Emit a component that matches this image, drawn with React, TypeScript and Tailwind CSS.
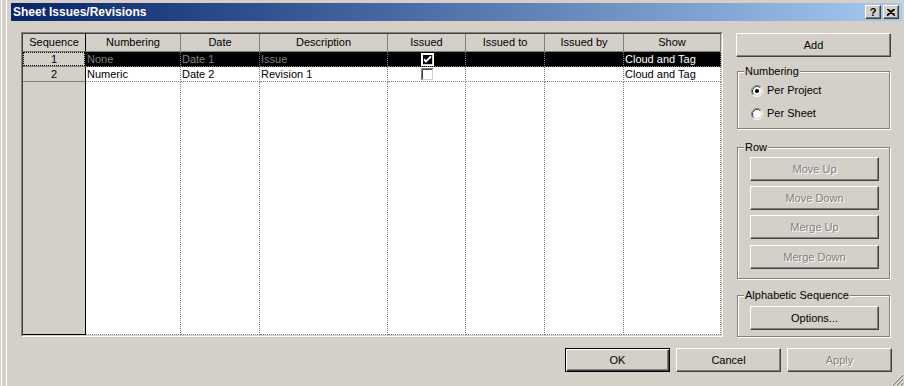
const font = "font-['Liberation_Sans',Arial,sans-serif]";
const raised =
  "bg-[#d4d0c8] border border-t-white border-l-white border-r-[#404040] border-b-[#404040] shadow-[inset_-1px_-1px_0_#808080]";
const dimText = "text-[#808080] [text-shadow:1px_1px_0_#fff]";

function Button({ label, disabled, w = "w-[129px]" }: { label: string; disabled?: boolean; w?: string }) {
  return (
    <div className={`${raised} ${w} h-[24px] flex items-center justify-center text-[11px] ${disabled ? dimText : "text-black"}`}>
      {label}
    </div>
  );
}

function Radio({ checked }: { checked?: boolean }) {
  return (
    <svg width="12" height="12" viewBox="0 0 12 12" className="shrink-0">
      <circle cx="6" cy="6" r="5" fill="#fff" />
      <path d="M2.11 9.89 A5.5 5.5 0 0 1 9.89 2.11" stroke="#808080" fill="none" />
      <path d="M9.89 2.11 A5.5 5.5 0 0 1 2.11 9.89" stroke="#fff" fill="none" />
      <path d="M2.82 9.18 A4.5 4.5 0 0 1 9.18 2.82" stroke="#404040" fill="none" />
      <path d="M9.18 2.82 A4.5 4.5 0 0 1 2.82 9.18" stroke="#d4d0c8" fill="none" />
      {checked && <circle cx="6" cy="6" r="2" fill="#000" />}
    </svg>
  );
}

function Check({ checked, dark }: { checked?: boolean; dark?: boolean }) {
  return (
    <svg width="13" height="13" viewBox="0 0 13 13">
      <rect x="0" y="0" width="13" height="13" fill="#fff" />
      <path d="M0.5 12.5 V0.5 H12.5" stroke={dark ? "#fff" : "#808080"} fill="none" />
      <path d="M1.5 11.5 V1.5 H11.5" stroke={dark ? "#fff" : "#404040"} fill="none" />
      <path d="M12.5 0.5 V12.5 H0.5" stroke="#fff" fill="none" />
      <path d="M11.5 1.5 V11.5 H1.5" stroke="#d4d0c8" fill="none" />
      <rect x="2" y="2" width="9" height="9" fill={dark ? "#000" : "#fff"} />
      {checked && (
        <path d="M3 6 L5 8 L10 3 M3 7 L5 9 L10 4" stroke={dark ? "#fff" : "#000"} strokeWidth="1.2" fill="none" />
      )}
    </svg>
  );
}

function Group({ title, children, inner }: { title: string; children: React.ReactNode; inner: string }) {
  return (
    <fieldset className="ml-[1px] w-[153px] border border-[#808080] shadow-[inset_1px_1px_0_#fff,1px_1px_0_#fff]">
      <legend className="ml-[6px] px-[1px] text-[11px] leading-[13px] bg-[#d4d0c8]">{title}</legend>
      <div className={inner}>{children}</div>
    </fieldset>
  );
}

const cols = ["Sequence", "Numbering", "Date", "Description", "Issued", "Issued to", "Issued by", "Show"];
const grid = "grid grid-cols-[63px_95px_79px_128px_78px_79px_79px_97px]";
const dataCell = "border-r border-b border-dotted border-[#808080] pl-[1px] flex items-center whitespace-nowrap overflow-hidden";

function Table() {
  const rows = [
    { seq: "1", numbering: "None", date: "Date 1", desc: "Issue", issued: true, show: "Cloud and Tag", sel: true },
    { seq: "2", numbering: "Numeric", date: "Date 2", desc: "Revision 1", issued: false, show: "Cloud and Tag", sel: false },
  ];
  return (
    <div className="w-[702px] h-[305px] border border-t-[#808080] border-l-[#808080] border-r-white border-b-white">
      <div className="h-full border border-t-[#404040] border-l-[#404040] border-r-[#d4d0c8] border-b-[#d4d0c8] bg-white">
        <div className={`${grid} grid-rows-[18px_15px_15px_253px] text-[11px] leading-[13px]`}>
          {cols.map((c, i) => (
            <div
              key={c}
              className={`bg-[#d4d0c8] border-b border-r ${i === 0 ? "border-r-black border-b-[#808080]" : "border-[#808080]"} flex items-center justify-center`}
            >
              {c}
            </div>
          ))}
          {rows.map((r) => {
            const bg = r.sel ? "bg-black" : "bg-white";
            const dim = r.sel ? "text-[#808080]" : "text-black";
            return [
              <div key={r.seq + "s"} className="bg-[#d4d0c8] border-r border-r-black border-b border-b-[#808080] flex">
                <div className={`flex-1 flex items-center justify-center ${r.sel ? "border border-dotted border-black" : ""}`}>
                  {r.seq}
                </div>
              </div>,
              <div key={r.seq + "n"} className={`${dataCell} ${bg} ${dim}`}>{r.numbering}</div>,
              <div key={r.seq + "d"} className={`${dataCell} ${bg} ${dim}`}>{r.date}</div>,
              <div key={r.seq + "x"} className={`${dataCell} ${bg} ${dim}`}>{r.desc}</div>,
              <div key={r.seq + "i"} className={`${dataCell} ${bg} justify-center`}>
                <Check checked={r.issued} dark={r.sel} />
              </div>,
              <div key={r.seq + "t"} className={`${dataCell} ${bg}`} />,
              <div key={r.seq + "b"} className={`${dataCell} ${bg}`} />,
              <div key={r.seq + "w"} className={`${dataCell} ${bg} ${r.sel ? "text-white" : "text-black"}`}>{r.show}</div>,
            ];
          })}
          <div className="bg-[#d4d0c8] border-r border-b border-black" />
          {cols.slice(1).map((c) => (
            <div key={c + "f"} className={dataCell} />
          ))}
        </div>
      </div>
    </div>
  );
}

function Right() {
  return (
    <div className="w-[155px] flex flex-col text-[11px]">
      <div className="mt-[1px]">
        <Button label="Add" w="w-[155px]" />
      </div>
      <div className="mt-[8px]">
        <Group title="Numbering" inner="pl-[13px] pt-[5px] pb-[7px] flex flex-col gap-[8px]">
          <div className="h-[15px] flex items-center gap-[4px]">
            <Radio checked />
            <span>Per Project</span>
          </div>
          <div className="h-[15px] flex items-center gap-[4px]">
            <Radio />
            <span>Per Sheet</span>
          </div>
        </Group>
      </div>
      <div className="mt-[12px]">
        <Group title="Row" inner="pl-[12px] pt-[3px] pb-[9px] flex flex-col gap-[5px]">
          <Button label="Move Up" disabled />
          <Button label="Move Down" disabled />
          <Button label="Merge Up" disabled />
          <div className="mt-[1px]">
            <Button label="Merge Down" disabled />
          </div>
        </Group>
      </div>
      <div className="mt-[10px]">
        <Group title="Alphabetic Sequence" inner="pl-[12px] pt-[4px] pb-[6px]">
          <Button label="Options..." />
        </Group>
      </div>
    </div>
  );
}

export default function App() {
  return (
    <div className={`relative w-[904px] h-[386px] overflow-hidden bg-[#d4d0c8] ${font} text-black pl-[1px]`}>
      <div className="h-full border-l border-white pl-[4px]">
        <div className="h-full border-l border-white pl-[4px] pt-[3px]">
          {/* title bar */}
          <div className="w-[891px] h-[18px] flex items-center justify-between pl-[2px] pr-[3px] bg-gradient-to-r from-[#0a246a] to-[#a6caf0]">
            <span className="text-white font-bold text-[12px]">Sheet Issues/Revisions</span>
            <div className="flex gap-[2px]">
              <div className={`${raised} w-[16px] h-[14px] flex items-center justify-center text-[11px] font-bold leading-none`}>?</div>
              <div className={`${raised} w-[16px] h-[14px] flex items-center justify-center`}>
                <svg width="8" height="7" viewBox="0 0 8 7">
                  <path d="M0 0 L8 7 M8 0 L0 7 M1 0 L8 6 M7 0 L0 6" stroke="#000" strokeWidth="1.2" />
                </svg>
              </div>
            </div>
          </div>

          {/* body */}
          <div className="w-[891px] pl-[10px] pt-[11px] flex flex-col">
            <div className="flex gap-[13px]">
              <Table />
              <Right />
            </div>
            <div className="mt-[11px] pr-[10px] flex justify-end gap-[6px] text-[11px]">
              <div className="w-[105px] h-[24px] bg-[#d4d0c8] border border-black shadow-[inset_1px_1px_0_#fff,inset_-1px_-1px_0_#404040,inset_-2px_-2px_0_#808080] flex items-center justify-center">
                OK
              </div>
              <Button label="Cancel" w="w-[105px]" />
              <Button label="Apply" w="w-[105px]" disabled />
            </div>
          </div>
        </div>
      </div>

      {/* size grip */}
      <svg className="absolute right-0 bottom-0" width="12" height="12" viewBox="0 0 12 12">
        <path d="M11 1 L1 11 M11 5 L5 11 M11 9 L9 11" stroke="#808080" strokeWidth="1.4" />
        <path d="M11 0 L0 11 M11 4 L4 11 M11 8 L8 11" stroke="#fff" strokeWidth="0.8" />
      </svg>
    </div>
  );
}
